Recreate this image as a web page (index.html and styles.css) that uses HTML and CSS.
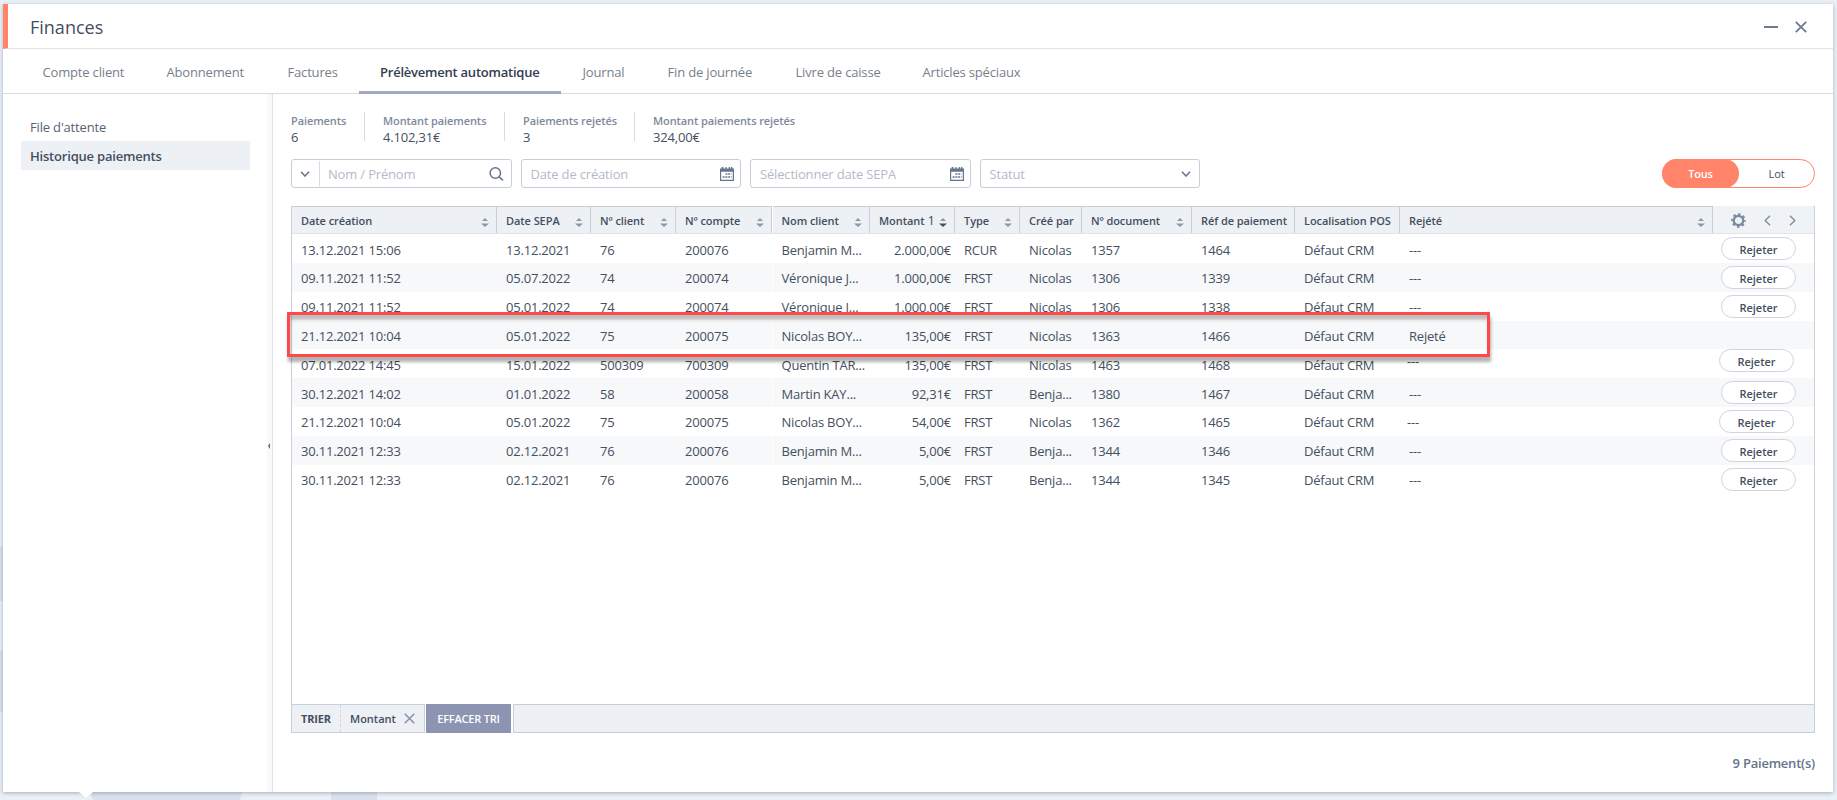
FILE: index.html
```html
<!DOCTYPE html>
<html lang="fr">
<head>
<meta charset="utf-8">
<title>Finances</title>
<link rel="stylesheet" href="styles.css">
</head>
<body>
<svg class="defs" width="0" height="0" aria-hidden="true">
  <symbol id="i-chev" viewBox="0 0 10 6"><path d="M1 .8 5 5 9 .8" fill="none" stroke="currentColor" stroke-width="1.5"/></symbol>
  <symbol id="i-cal" viewBox="0 0 14 14"><path fill="currentColor" fill-rule="evenodd" d="M0 1.5h1.6V0h1.8v1.5h2V0h1.2v1.5h2V0h1.2v1.5h1V0h1.6v1.5H14V14H0zM1.2 4.8v8h11.6v-8z"/><path stroke="currentColor" stroke-width="1.6" stroke-dasharray="2 .8" d="M5.4 7h6M2.6 10h9"/></symbol>
  <symbol id="i-x" viewBox="0 0 12 12"><path d="M.8.8 11.2 11.2M11.2.8.8 11.2" fill="none" stroke="currentColor" stroke-width="1.8"/></symbol>
</svg>
<div class="backdrop"><i class="shape s1"></i><i class="shape s2"></i><i class="shape s3"></i><i class="shape s4"></i></div>
<div class="panel">
  <header class="titlebar">
    <h1>Finances</h1>
    <div class="winbtns"><i class="minimize"></i><svg width="12" height="12"><use href="#i-x"/></svg></div>
  </header>
  <nav class="tabs">
    <a class="t1">Compte client</a><a class="t2">Abonnement</a><a class="t3">Factures</a><a class="t4 active">Prélèvement automatique</a><a class="t5">Journal</a><a class="t6">Fin de journée</a><a class="t7">Livre de caisse</a><a class="t8">Articles spéciaux</a>
  </nav>
  <div class="body">
    <aside class="side">
      <a>File d'attente</a>
      <a class="active">Historique paiements</a>
      <i class="collapse"></i>
    </aside>
    <main class="main">
      <dl class="stats">
        <div class="st1"><dt>Paiements</dt><dd>6</dd></div>
        <div class="st2"><dt>Montant paiements</dt><dd>4.102,31€</dd></div>
        <div class="st3"><dt>Paiements rejetés</dt><dd>3</dd></div>
        <div class="st4"><dt>Montant paiements rejetés</dt><dd>324,00€</dd></div>
      </dl>
      <div class="filters">
        <div class="field"><span class="drop"><svg width="10" height="6"><use href="#i-chev"/></svg></span><span class="ph">Nom / Prénom</span><svg class="mag" width="15" height="14" viewBox="0 0 15 14"><circle cx="6.3" cy="6" r="5.2"/><path d="M9.8 9.6 14 13.4"/></svg></div>
        <div class="field"><span class="ph">Date de création</span><svg width="14" height="14"><use href="#i-cal"/></svg></div>
        <div class="field"><span class="ph">Sélectionner date SEPA</span><svg width="14" height="14"><use href="#i-cal"/></svg></div>
        <div class="field"><span class="ph">Statut</span><svg class="sel" width="10" height="6"><use href="#i-chev"/></svg></div>
        <div class="toggle"><b>Tous</b><span>Lot</span></div>
      </div>
      <section class="grid">
        <div class="row head" id="head"></div>
        <div class="rows" id="rows"></div>
        <div class="highlight"></div>
      </section>
      <div class="sortbar">
        <div class="crit"><b>TRIER</b><span>Montant</span><svg width="11" height="11"><use href="#i-x"/></svg></div>
        <button>EFFACER TRI</button>
        <div class="rest"></div>
      </div>
      <div class="count">9 Paiement(s)</div>
    </main>
  </div>
  <i class="pointer"></i>
</div>
<script src="table.js"></script>
</body>
</html>
```
FILE: styles.css
```css
* { box-sizing: border-box; }
body { margin: 0; width: 1837px; height: 800px; overflow: hidden; position: relative; background: #ebf0f7; padding: 4px 4px 8px 3px; font-family: "Open Sans", "Noto Sans", sans-serif; font-size: 13px; color: #454f5e; letter-spacing: -.17px; }
h1, dl, dd { margin: 0; }
.defs { position: absolute; }
.backdrop { position: absolute; inset: 0; }
.shape { position: absolute; background: #dae1ed; }
.s1 { left: 0; top: 546px; width: 6px; height: 55px; }
.s2 { left: 0; top: 650px; width: 6px; height: 62px; }
.s3 { left: 88px; top: 785px; width: 156px; height: 15px; clip-path: polygon(0 0, 100% 0, calc(100% - 4px) 100%, 5px 100%); }
.s4 { left: 331px; top: 785px; width: 46px; height: 15px; }
.panel { position: relative; width: 1830px; height: 788px; background: #fff; box-shadow: 0 1px 4px rgba(60, 75, 95, .4); display: flex; flex-direction: column; }
.pointer { position: absolute; left: 76px; top: 788px; border: 7px solid transparent; border-top: 6px solid #fff; border-bottom: 0; }
.titlebar { height: 45px; border-left: 5px solid #ff8469; border-bottom: 1px solid #e2e4e8; display: flex; align-items: center; justify-content: space-between; padding: 0 26px 0 22px; }
h1 { font-size: 18px; font-weight: 400; line-height: 24px; padding-top: 2px; letter-spacing: 0; }
.winbtns { display: flex; align-items: center; gap: 17px; color: #6b7b93; padding-top: 2px; }
.minimize { width: 14px; height: 2px; background: #6b7b93; }
.tabs { height: 45px; border-bottom: 1px solid #d8dbe0; padding-left: 18px; display: flex; color: #777f8b; }
.tabs a { height: 45px; line-height: 47px; padding-left: 21.5px; white-space: nowrap; }
.tabs .active { color: #333d4f; font-weight: 600; padding-left: 21px; border-bottom: 3px solid #9fa7c2; letter-spacing: -.23px; }
.t1 { width: 124px; } .t2 { width: 121px; } .t3 { width: 93px; } .t4 { width: 202px; } .t5 { width: 85px; } .t6 { width: 128px; } .t7 { width: 127px; } .t8 { width: 140px; }
.body { flex: 1; display: flex; min-height: 0; }
.side { position: relative; flex: none; width: 270px; border-right: 1px solid #e0e3e8; padding: 18px 22px 0 18px; background: linear-gradient(to right, #fff 264px, #f9f9fa 264px); }
.side a { display: block; height: 29px; line-height: 31px; padding-left: 9px; color: #59626f; }
.side .active { background: #edf0f5; font-weight: 600; color: #454f5e; letter-spacing: -.2px; }
.collapse { position: absolute; left: 265px; top: 349px; border: 3px solid transparent; border-right: 2px solid #5d6877; border-left: 0; }
.main { flex: 1; min-width: 0; padding: 18px 18px 0; display: flex; flex-direction: column; }
.stats { display: flex; height: 32px; }
.stats div { height: 29px; border-right: 1px solid #d8dbe2; margin-right: 18px; white-space: nowrap; }
.stats .st4 { border: 0; }
.st1 { width: 74px; } .st2 { width: 122px; } .st3 { width: 112px; }
dt { font-size: 11px; line-height: 17px; color: #7e899c; font-weight: 600; letter-spacing: -.09px; }
dd { line-height: 17px; }
.filters { display: flex; gap: 9px; margin-top: 15px; height: 29px; }
.field { width: 220.5px; height: 29px; border: 1px solid #c9cdd7; border-radius: 3px; display: flex; align-items: center; padding: 0 6px 0 9px; color: #66758c; }
.field:first-child { padding: 0 7px 0 0; }
.drop { width: 28px; height: 25px; border-right: 1px solid #d8dbe2; margin-right: 8px; padding-right: 2px; display: flex; align-items: center; justify-content: center; }
.ph { flex: 1; color: #b4bac7; line-height: 20px; padding-top: 1px; }
.mag { fill: none; stroke: #66758c; stroke-width: 1.5; }
.sel { margin-right: 2px; }
.toggle { margin-left: auto; width: 153px; border: 1px solid #ff8469; border-radius: 15px; display: flex; text-align: center; font-size: 11px; line-height: 28px; font-weight: 500; }
.toggle b { width: 77px; height: 29px; margin: -1px 0 0 -1px; background: #ff8469; color: #fff; border-radius: 15px; line-height: 30px; font-weight: 600; }
.toggle span { width: 75px; }
.grid { position: relative; margin-top: 18px; width: 1524px; height: 498px; border: 1px solid #cdd2da; border-width: 0 1px; }
.row { display: grid; grid-template-columns: 205px 94px 85px 97px 97px 85px 65px 62px 110px 103px 105px 313px 101px; height: 29px; }
.row > span { padding: 0 0 0 9px; line-height: 31px; white-space: nowrap; overflow: hidden; letter-spacing: -.2px; }
.row:nth-child(1) > span, .row:nth-child(5) > span, .row:nth-child(6) > span { line-height: 33px; }
.row:nth-child(even) { background: #f6f8fa; }
.row:nth-child(4) { height: 28px; }
.row > .amount { text-align: right; padding-right: 4px; }
.row > .name { border-left: 1px solid #fff; margin-left: -1px; padding-left: 8.5px; }
.row.head { height: 28px; font-size: 11px; font-weight: 600; background: #edf0f5; border-bottom: 1px solid #e1e5ea; }
.row.head > span { display: flex; justify-content: space-between; line-height: 28px; border-top: 1px solid #c9ced7; border-right: 1px solid #c9ced7; padding-right: 7px; letter-spacing: -.07px; }
.row.head > span:nth-child(4) { margin-right: 1px; box-shadow: 1px 0 #fff; }
.row.head > span:nth-child(5) { padding-left: 8.5px; }
.head > span svg { margin-top: 11px; flex: none; }
.up, .down { fill: #8d97b2; }
.asc .down { fill: #454f5e; }
.asc small { font-size: 13px; font-weight: 400; margin: 0 auto 0 3px; line-height: 27px; }
.row.head > .tools { border: 0; align-items: center; color: #7a8aa0; padding: 0 18px 0 18px; background: #eff3f6; }
.head > .tools svg { margin: 2px 0 0; }
.reject { width: 75px; height: 23px; margin: 3px 0 0 8px; border: 1px solid #cfd4dd; border-radius: 12px; background: #fff; font-size: 11px; font-weight: 600; line-height: 24px; text-align: center; letter-spacing: 0; }
.shift { transform: translate(-2px, 0); }
.lift { transform: translate(-2px, -4px); }
.reject.lift { transform: translate(-2px, -3px); line-height: 23px; }
.highlight { position: absolute; left: -5px; top: 106px; width: 1203px; height: 45px; border: 3px solid #ff4848; box-shadow: 1px 5px 3px rgba(0, 0, 0, .3), inset 1px 5px 3px rgba(0, 0, 0, .25); }
.sortbar { display: flex; height: 29px; width: 1524px; }
.crit { flex: none; width: 134px; border: 1px solid #c8d0da; background: #edf0f5; display: flex; align-items: center; font-size: 11px; padding-left: 9px; font-weight: 600; }
.crit b { flex: none; width: 40px; height: 27px; line-height: 28px; border-right: 1px dashed #cfd5de; font-weight: 700; }
.crit span { flex: none; width: 63px; padding-left: 9px; letter-spacing: 0; }
.crit svg { color: #8c94b2; flex: none; }
button { width: 85px; margin: 0 2px 0 1px; padding: 0; border: 0; background: #8c94b2; color: #fff; font: 600 11px "Open Sans", sans-serif; letter-spacing: -.2px; }
.rest { flex: 1; border: 1px solid #c8ced9; background: #edf0f5; }
.count { text-align: right; font-weight: 600; color: #66748b; margin-top: 21px; line-height: 18px; letter-spacing: -.22px; }
```
FILE: table.js
```js
const sort = '<svg width="8" height="9" viewBox="0 0 8 9"><path class="up" d="M4 0 7 3H1z"/><path class="down" d="M0 5.5h8L4 9z"/></svg>';
const heads = [['Date création', 1], ['Date SEPA', 1], ['Nº client', 1], ['Nº compte', 1], ['Nom client', 1], ['Montant<small>1</small>', 1], ['Type', 1], ['Créé par', 0], ['Nº document', 1], ['Réf de paiement', 0], ['Localisation POS', 0], ['Rejété', 1]];
const gear = '<svg width="15" height="15" viewBox="-7.5 -7.5 15 15"><circle r="4.7" fill="none" stroke="currentColor" stroke-width="2.2"/><circle r="6.3" fill="none" stroke="currentColor" stroke-width="2" stroke-dasharray="2.5 2.448" stroke-dashoffset="1.25"/></svg>';
const arrow = d => `<svg width="7" height="11" viewBox="0 0 7 11"><path d="${d}" fill="none" stroke="currentColor" stroke-width="1.3"/></svg>`;
document.getElementById('head').innerHTML = heads.map(([t, s]) => `<span class="${t.startsWith('Montant') ? 'asc' : ''}">${t}${s ? sort : ''}</span>`).join('') +
  `<span class="tools">${gear}${arrow('M6 .8 1.2 5.5 6 10.2')}${arrow('M1 .8 5.8 5.5 1 10.2')}</span>`;
const data = `13.12.2021 15:06|13.12.2021|76|200076|Benjamin M...|2.000,00€|RCUR|Nicolas|1357|1464|Défaut CRM|---
09.11.2021 11:52|05.07.2022|74|200074|Véronique J...|1.000,00€|FRST|Nicolas|1306|1339|Défaut CRM|---
09.11.2021 11:52|05.01.2022|74|200074|Véronique J...|1.000,00€|FRST|Nicolas|1306|1338|Défaut CRM|---
21.12.2021 10:04|05.01.2022|75|200075|Nicolas BOY...|135,00€|FRST|Nicolas|1363|1466|Défaut CRM|Rejeté
07.01.2022 14:45|15.01.2022|500309|700309|Quentin TAR...|135,00€|FRST|Nicolas|1463|1468|Défaut CRM|---
30.12.2021 14:02|01.01.2022|58|200058|Martin KAY...|92,31€|FRST|Benja...|1380|1467|Défaut CRM|---
21.12.2021 10:04|05.01.2022|75|200075|Nicolas BOY...|54,00€|FRST|Nicolas|1362|1465|Défaut CRM|---
30.11.2021 12:33|02.12.2021|76|200076|Benjamin M...|5,00€|FRST|Benja...|1344|1346|Défaut CRM|---
30.11.2021 12:33|02.12.2021|76|200076|Benjamin M...|5,00€|FRST|Benja...|1344|1345|Défaut CRM|---`;
document.getElementById('rows').innerHTML = data.split('\n').map((line, r) => {
  const nudge = r === 4 ? 'lift' : r === 6 ? 'shift' : '';
  return '<div class="row">' + line.split('|').map((t, c) => `<span class="${c === 5 ? 'amount' : c === 4 ? 'name' : c === 11 ? nudge : ''}">${t}</span>`).join('') +
    (r === 3 ? '' : `<div class="reject ${nudge}">Rejeter</div>`) + '</div>';
}).join('');
```
